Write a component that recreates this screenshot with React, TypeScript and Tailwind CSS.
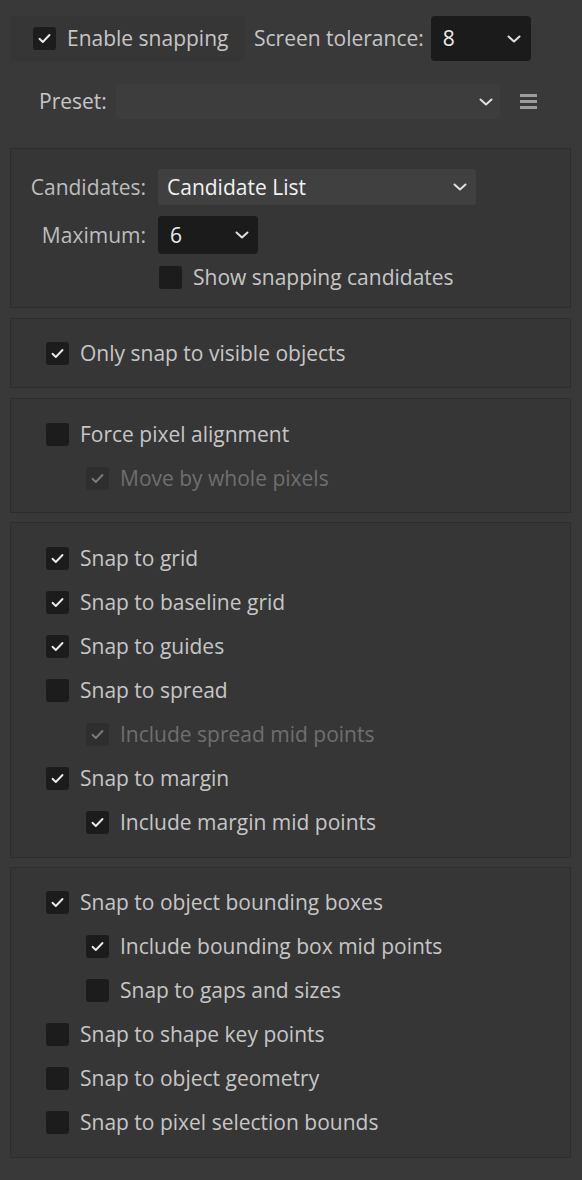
import React from "react";

type CheckProps = {
  checked?: boolean;
  disabled?: boolean;
};

function Checkbox({ checked = false, disabled = false }: CheckProps) {
  return (
    <span
      className={
        "flex h-[23px] w-[23px] shrink-0 items-center justify-center rounded-[3px] " +
        (disabled ? "bg-[#2e2e2e]" : "bg-[#1c1c1c]")
      }
    >
      {checked && (
        <svg width="15" height="15" viewBox="0 0 15 15" fill="none">
          <path
            d="M2.5 7.8 L5.8 11 L12.5 4"
            stroke={disabled ? "#7c7c7c" : "#ececec"}
            strokeWidth="1.9"
            strokeLinecap="round"
            strokeLinejoin="round"
          />
        </svg>
      )}
    </span>
  );
}

function Chevron({ color = "#e0e0e0" }: { color?: string }) {
  return (
    <svg width="14" height="8" viewBox="0 0 14 8" fill="none">
      <path d="M1.5 1.5 L7 6.5 L12.5 1.5" stroke={color} strokeWidth="2" strokeLinecap="round" strokeLinejoin="round" />
    </svg>
  );
}

type RowProps = {
  label: string;
  checked?: boolean;
  disabled?: boolean;
  nested?: boolean;
};

function CheckRow({ label, checked, disabled, nested }: RowProps) {
  return (
    <div className={"flex h-[44px] items-center gap-[11px] " + (nested ? "pl-[40px]" : "")}>
      <Checkbox checked={checked} disabled={disabled} />
      <span className={disabled ? "text-[#6f6f6f]" : "text-[#c6c6c6]"}>{label}</span>
    </div>
  );
}

function Panel({ children, className = "" }: { children: React.ReactNode; className?: string }) {
  return (
    <div className={"border border-[#2e2e2e] bg-[#363636] " + className}>{children}</div>
  );
}

export default function App() {
  return (
    <div
      className="h-[1180px] w-[582px] overflow-hidden bg-[#393939] text-[21px] leading-none text-[#c6c6c6]"
      style={{ fontFamily: '"Open Sans", "Noto Sans", sans-serif' }}
    >
      <div className="pl-[10px] pr-[11px] pt-[16px]">
        {/* top row */}
        <div className="flex items-center">
          <div className="flex h-[45px] w-[235px] items-center gap-[11px] rounded-[3px] bg-[#363636] pl-[23px]">
            <Checkbox checked />
            <span>Enable snapping</span>
          </div>
          <span className="ml-[9px]">Screen tolerance:</span>
          <div className="ml-[7px] flex h-[45px] w-[100px] items-center justify-between rounded-[4px] bg-[#1b1b1b] pl-[12px] pr-[10px]">
            <span className="text-[#ececec]">8</span>
            <Chevron />
          </div>
        </div>

        {/* preset row */}
        <div className="mt-[23px] flex items-center">
          <span className="ml-[29px] w-[77px]">Preset:</span>
          <div className="flex h-[35px] w-[384px] items-center justify-end rounded-[3px] bg-[#3d3d3d] pr-[7px]">
            <Chevron />
          </div>
          <div className="ml-[20px] flex w-[17px] flex-col gap-[3px]">
            <span className="h-[3px] w-[17px] bg-[#9c9c9c]" />
            <span className="h-[3px] w-[17px] bg-[#9c9c9c]" />
            <span className="h-[3px] w-[17px] bg-[#9c9c9c]" />
          </div>
        </div>

        <div className="mt-[29px] flex flex-col gap-[10px]">
          <Panel className="pb-[18px] pt-[20px]">
            <div className="grid grid-cols-[135px_1fr] items-center gap-x-[12px] gap-y-[11px]">
              <span className="text-right text-[#bdbdbd]">Candidates:</span>
              <div className="flex h-[36px] w-[318px] items-center justify-between rounded-[3px] bg-[#404040] pl-[9px] pr-[9px]">
                <span className="text-[#f2f2f2]">Candidate List</span>
                <Chevron />
              </div>
              <span className="text-right text-[#bdbdbd]">Maximum:</span>
              <div className="flex h-[38px] w-[100px] items-center justify-between rounded-[4px] bg-[#1b1b1b] pl-[12px] pr-[9px]">
                <span className="text-[#ececec]">6</span>
                <Chevron />
              </div>
              <span />
              <div className="flex h-[24px] items-center gap-[11px] pl-[1px]">
                <Checkbox />
                <span>Show snapping candidates</span>
              </div>
            </div>
          </Panel>

          <Panel className="py-[12px] pl-[35px]">
            <CheckRow label="Only snap to visible objects" checked />
          </Panel>

          <Panel className="pb-[12px] pt-[13px] pl-[35px]">
            <CheckRow label="Force pixel alignment" />
            <CheckRow label="Move by whole pixels" checked disabled nested />
          </Panel>

          <Panel className="-mt-[1px] py-[13px] pl-[35px]">
            <CheckRow label="Snap to grid" checked />
            <CheckRow label="Snap to baseline grid" checked />
            <CheckRow label="Snap to guides" checked />
            <CheckRow label="Snap to spread" />
            <CheckRow label="Include spread mid points" checked disabled nested />
            <CheckRow label="Snap to margin" checked />
            <CheckRow label="Include margin mid points" checked nested />
          </Panel>

          <Panel className="-mt-[1px] pb-[13px] pt-[12px] pl-[35px]">
            <CheckRow label="Snap to object bounding boxes" checked />
            <CheckRow label="Include bounding box mid points" checked nested />
            <CheckRow label="Snap to gaps and sizes" nested />
            <CheckRow label="Snap to shape key points" />
            <CheckRow label="Snap to object geometry" />
            <CheckRow label="Snap to pixel selection bounds" />
          </Panel>
        </div>
      </div>
    </div>
  );
}
